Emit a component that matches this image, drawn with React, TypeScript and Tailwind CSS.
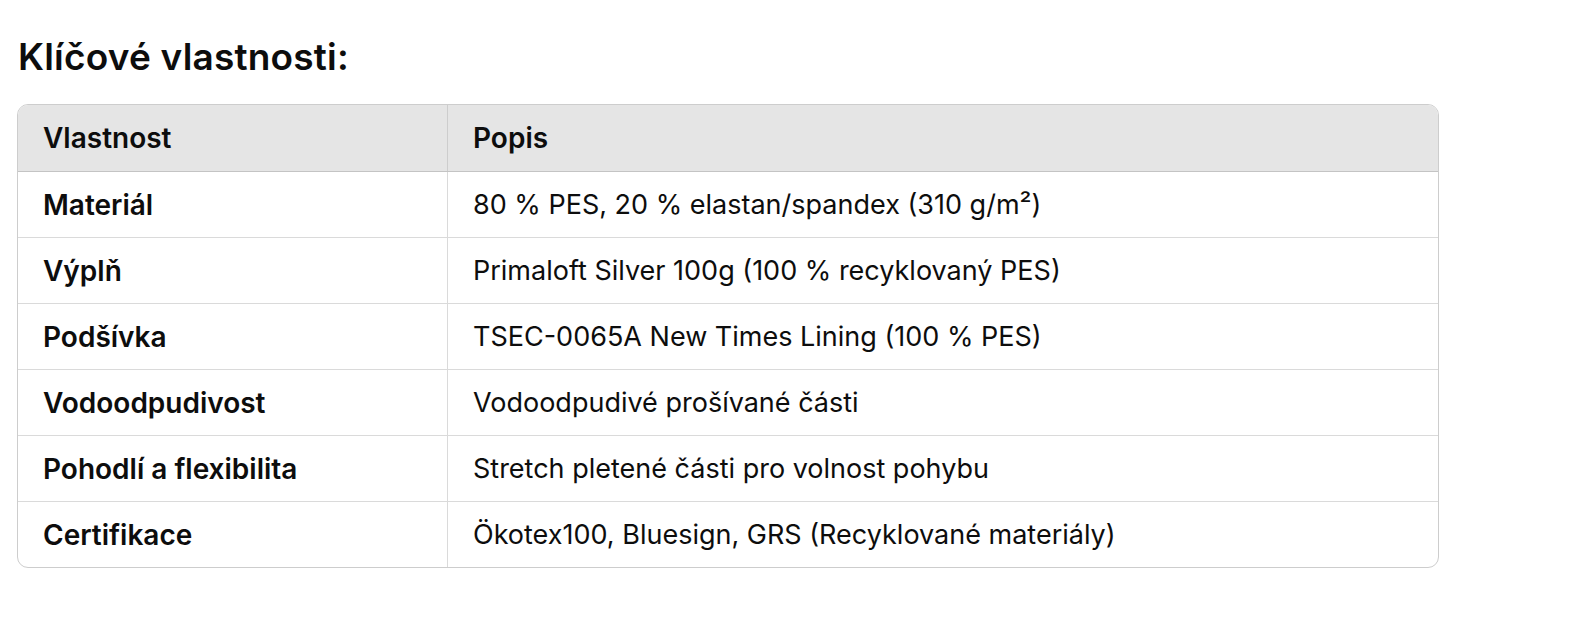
const rows: [string, string][] = [
  ["Materiál", "80 % PES, 20 % elastan/spandex (310 g/m²)"],
  ["Výplň", "Primaloft Silver 100g (100 % recyklovaný PES)"],
  ["Podšívka", "TSEC-0065A New Times Lining (100 % PES)"],
  ["Vodoodpudivost", "Vodoodpudivé prošívané části"],
  ["Pohodlí a flexibilita", "Stretch pletené části pro volnost pohybu"],
  ["Certifikace", "Ökotex100, Bluesign, GRS (Recyklované materiály)"],
];

const App = () => {
  return (
    <div
      className="min-h-screen bg-white text-[#0d0d0d] pt-[35px]"
      style={{ fontFamily: "Inter, 'Noto Sans', sans-serif" }}
    >
      <h2 className="ml-[18px] text-[37px] leading-[44px] font-semibold tracking-[0.2px]">
        Klíčové vlastnosti:
      </h2>
      <div className="mt-[25px] ml-[17px] w-[1422px] border border-[#cdcdcd] rounded-[11px] overflow-hidden leading-[32px]">
        <div className="grid grid-cols-[430px_1fr] bg-[#e5e5e5] border-b border-[#c4c4c4] text-[28px] font-semibold">
          <div className="pl-[25px] pt-[17px] pb-[17px] border-r border-[#cdcdcd]">Vlastnost</div>
          <div className="pl-[25px] pt-[17px] pb-[17px]">Popis</div>
        </div>
        {rows.map(([name, desc], i) => (
          <div
            key={name}
            className={
              i < rows.length - 1
                ? "grid grid-cols-[430px_1fr] border-b border-[#dadada]"
                : "grid grid-cols-[430px_1fr]"
            }
          >
            <div className="pl-[25px] pt-[17px] pb-[16px] border-r border-[#dadada] text-[28px] font-semibold">
              {name}
            </div>
            <div className="pl-[25px] pt-[17px] pb-[16px] text-[27px]">{desc}</div>
          </div>
        ))}
      </div>
    </div>
  );
};

export default App;
